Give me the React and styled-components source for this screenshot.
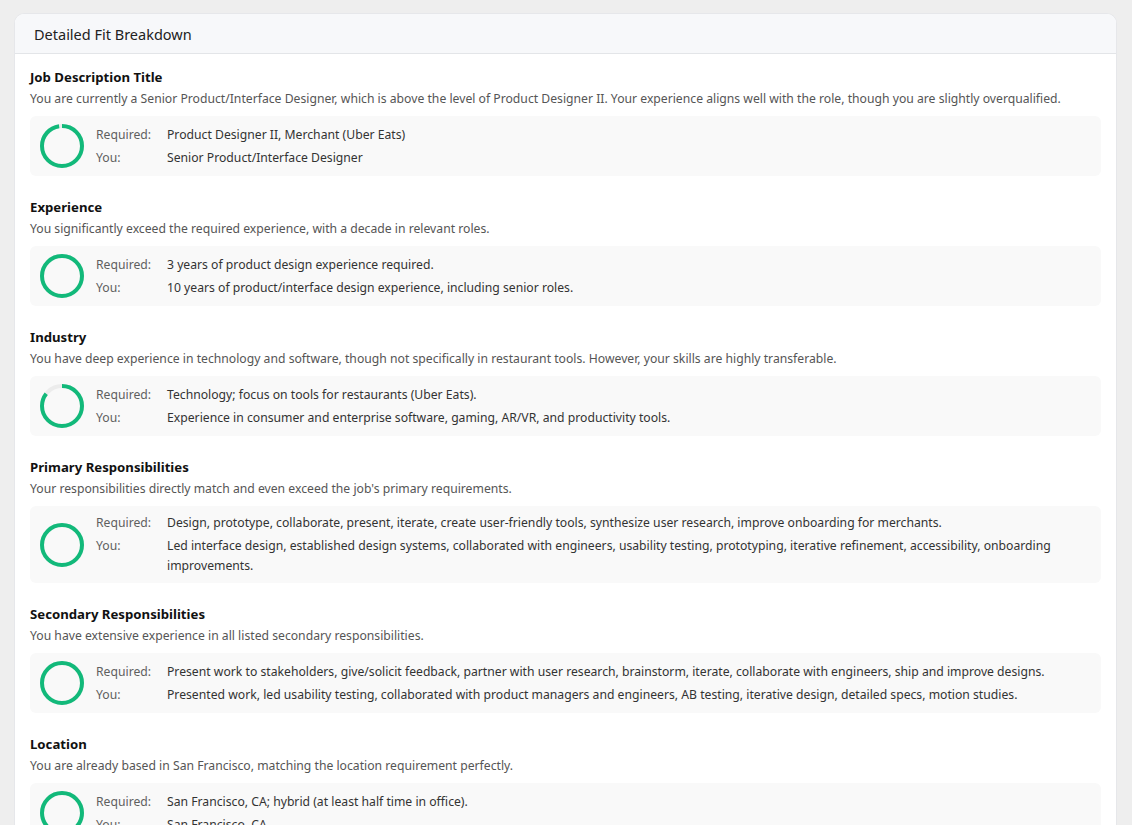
import React from 'react';
import styled, { createGlobalStyle } from 'styled-components';

const GlobalStyle = createGlobalStyle`
  body {
    margin: 0;
    background: #eeeeee;
    font-family: 'Noto Sans', 'Open Sans', sans-serif;
    color: #222;
  }
`;

const Page = styled.div`
  padding: 13px 15px 0 14px;
  height: 825px;
  overflow: hidden;
  box-sizing: border-box;
`;

const Card = styled.div`
  background: #fff;
  border-radius: 10px 10px 0 0;
  border: 1px solid #e6e7ea;
  border-bottom: none;
  overflow: hidden;
`;

const CardHeader = styled.div`
  background: #f7f8fa;
  border-bottom: 1px solid #e3e5e8;
  height: 39px;
  display: flex;
  align-items: center;
  padding-left: 19px;
  font-size: 14.5px;
  color: #222;
`;

const CardBody = styled.div`
  padding: 13px 15px 0 15px;
  display: flex;
  flex-direction: column;
  gap: 21px;
`;

const Section = styled.section`
  display: flex;
  flex-direction: column;
`;

const Title = styled.h3`
  margin: 0;
  font-size: 13.2px;
  font-weight: 700;
  line-height: 20px;
  color: #111;
`;

const Description = styled.p`
  margin: 2px 0 7px;
  font-size: 12.2px;
  line-height: 20px;
  color: #555;
`;

const MatchBox = styled.div`
  background: #f9f9f9;
  border-radius: 6px;
  padding: 7px 10px;
  min-height: 60px;
  box-sizing: border-box;
  display: flex;
  align-items: center;
  gap: 12px;
`;

const Rows = styled.div`
  display: grid;
  grid-template-columns: 71px 1fr;
  row-gap: 3px;
  font-size: 12.2px;
  line-height: 20px;
  align-self: center;
`;

const Label = styled.span`
  color: #5f5f5f;
`;

const Value = styled.span`
  color: #333;
`;

const Ring = ({ value }) => {
  const r = 20;
  const c = 2 * Math.PI * r;
  return (
    <svg width="44" height="44" viewBox="0 0 44 44" style={{ flex: 'none' }}>
      <circle cx="22" cy="22" r={r} fill="none" stroke="#ececec" strokeWidth="4" />
      <circle
        cx="22"
        cy="22"
        r={r}
        fill="none"
        stroke="#12b97a"
        strokeWidth="4"
        strokeDasharray={`${c * value} ${c}`}
        transform="rotate(-90 22 22)"
      />
    </svg>
  );
};

const items = [
  {
    title: 'Job Description Title',
    text: 'You are currently a Senior Product/Interface Designer, which is above the level of Product Designer II. Your experience aligns well with the role, though you are slightly overqualified.',
    required: 'Product Designer II, Merchant (Uber Eats)',
    you: 'Senior Product/Interface Designer',
    score: 0.97,
  },
  {
    title: 'Experience',
    text: 'You significantly exceed the required experience, with a decade in relevant roles.',
    required: '3 years of product design experience required.',
    you: '10 years of product/interface design experience, including senior roles.',
    score: 1,
  },
  {
    title: 'Industry',
    text: 'You have deep experience in technology and software, though not specifically in restaurant tools. However, your skills are highly transferable.',
    required: 'Technology; focus on tools for restaurants (Uber Eats).',
    you: 'Experience in consumer and enterprise software, gaming, AR/VR, and productivity tools.',
    score: 0.85,
  },
  {
    title: 'Primary Responsibilities',
    text: "Your responsibilities directly match and even exceed the job's primary requirements.",
    required: 'Design, prototype, collaborate, present, iterate, create user-friendly tools, synthesize user research, improve onboarding for merchants.',
    you: 'Led interface design, established design systems, collaborated with engineers, usability testing, prototyping, iterative refinement, accessibility, onboarding improvements.',
    score: 1,
  },
  {
    title: 'Secondary Responsibilities',
    text: 'You have extensive experience in all listed secondary responsibilities.',
    required: 'Present work to stakeholders, give/solicit feedback, partner with user research, brainstorm, iterate, collaborate with engineers, ship and improve designs.',
    you: 'Presented work, led usability testing, collaborated with product managers and engineers, AB testing, iterative design, detailed specs, motion studies.',
    score: 1,
  },
  {
    title: 'Location',
    text: 'You are already based in San Francisco, matching the location requirement perfectly.',
    required: 'San Francisco, CA; hybrid (at least half time in office).',
    you: 'San Francisco, CA',
    score: 1,
  },
];

export default function App() {
  return (
    <>
      <GlobalStyle />
      <Page>
        <Card>
          <CardHeader>Detailed Fit Breakdown</CardHeader>
          <CardBody>
            {items.map((it) => (
              <Section key={it.title}>
                <Title>{it.title}</Title>
                <Description>{it.text}</Description>
                <MatchBox>
                  <Ring value={it.score} />
                  <Rows>
                    <Label>Required:</Label>
                    <Value>{it.required}</Value>
                    <Label>You:</Label>
                    <Value>{it.you}</Value>
                  </Rows>
                </MatchBox>
              </Section>
            ))}
          </CardBody>
        </Card>
      </Page>
    </>
  );
}
